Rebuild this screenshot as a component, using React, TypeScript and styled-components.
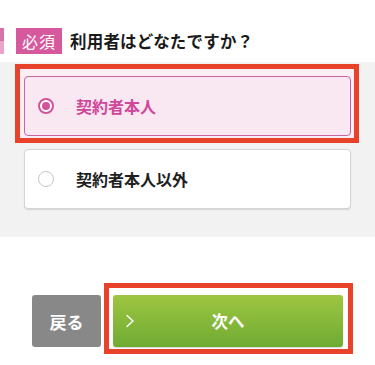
import React from 'react';
import styled, { createGlobalStyle } from 'styled-components';

const GlobalStyle = createGlobalStyle`
  html, body {
    margin: 0;
    padding: 0;
    background: #ffffff;
  }
  body {
    font-family: "Noto Sans CJK JP", "Noto Sans", sans-serif;
    color: #1a1a1a;
  }
`;

const Page = styled.div`
  width: 375px;
  height: 365px;
  overflow: hidden;
  padding-top: 28px;
  box-sizing: border-box;
`;

const Header = styled.div`
  display: flex;
  align-items: center;
  height: 26px;
`;

const SideMark = styled.div`
  width: 4px;
  height: 26px;
  background: linear-gradient(to bottom, #d870aa 0%, #d870aa 50%, #eaa4cb 50%, #eaa4cb 100%);
`;

const Badge = styled.span`
  display: flex;
  align-items: center;
  justify-content: center;
  width: 46px;
  height: 26px;
  margin-left: 12px;
  background: #d6599e;
  color: #ffffff;
  font-size: 16px;
  font-weight: 400;
  letter-spacing: 1px;
`;

const Title = styled.h2`
  margin: 0 0 0 8px;
  font-size: 16.5px;
  font-weight: 700;
  color: #1a1a1a;
  letter-spacing: 0.2px;
`;

const Choices = styled.div`
  margin-top: 8px;
  background: #f2f2f2;
  padding: 14px 24px 28px;
  display: flex;
  flex-direction: column;
  gap: 13px;
`;

const Highlighted = styled.div<{ $fill: string; $inset: string }>`
  position: relative;
  & > * {
    position: relative;
    z-index: 1;
  }
  &::before {
    content: '';
    position: absolute;
    inset: ${(p) => p.$inset};
    border: 5px solid #e8432a;
    background: ${(p) => p.$fill};
    z-index: 0;
  }
`;

const Option = styled.label<{ $selected?: boolean }>`
  display: flex;
  align-items: center;
  height: 60px;
  box-sizing: border-box;
  padding-left: 13px;
  border-radius: 4px;
  background: ${(p) => (p.$selected ? '#f9e8f2' : '#ffffff')};
  border: ${(p) => (p.$selected ? '1.5px solid #c866a2' : '1.5px solid #d4d4d4')};
  box-shadow: ${(p) => (p.$selected ? 'none' : '0 1px 1px rgba(0,0,0,0.12)')};
  cursor: pointer;
`;

const Radio = styled.span<{ $checked?: boolean }>`
  position: relative;
  width: 16px;
  height: 16px;
  box-sizing: border-box;
  border-radius: 50%;
  background: #ffffff;
  border: ${(p) => (p.$checked ? '2px solid #d2529b' : '1.5px solid #c6c6c6')};
  flex-shrink: 0;
  &::after {
    content: '';
    display: ${(p) => (p.$checked ? 'block' : 'none')};
    position: absolute;
    left: 2px;
    top: 2px;
    width: 8px;
    height: 8px;
    border-radius: 50%;
    background: #d2529b;
  }
`;

const OptionText = styled.span<{ $selected?: boolean }>`
  margin-left: 22px;
  font-size: 16px;
  font-weight: 700;
  color: ${(p) => (p.$selected ? '#d0479a' : '#1f1f1f')};
`;

const Actions = styled.div`
  display: flex;
  gap: 12px;
  padding: 0 32px;
  margin-top: 58px;
`;

const BackButton = styled.button`
  width: 69px;
  height: 52px;
  border: none;
  border-radius: 3px;
  background: #888888;
  color: #ffffff;
  font-family: inherit;
  font-size: 17px;
  font-weight: 700;
  padding: 0;
`;

const NextWrap = styled(Highlighted)`
  flex: 1;
  display: flex;
`;

const NextButton = styled.button`
  flex: 1;
  height: 52px;
  border: none;
  border-radius: 3px;
  background: linear-gradient(to bottom, #9ec541 0%, #6fab33 100%);
  box-shadow: 0 1px 1px rgba(0, 0, 0, 0.15);
  color: #ffffff;
  font-family: inherit;
  font-size: 16.5px;
  font-weight: 700;
  display: flex;
  align-items: center;
  padding: 0 0 0 12px;
`;

const NextLabel = styled.span`
  flex: 1;
  text-align: center;
  padding-right: 22px;
`;

const Chevron = () => (
  <svg width="10" height="14" viewBox="0 0 10 14" fill="none">
    <path d="M2 1.5 L8 7 L2 12.5" stroke="#ffffff" strokeWidth="1.5" strokeLinecap="round" strokeLinejoin="round" />
  </svg>
);

export default function App() {
  return (
    <>
      <GlobalStyle />
      <Page>
        <Header>
          <SideMark />
          <Badge>必須</Badge>
          <Title>利用者はどなたですか？</Title>
        </Header>
        <Choices>
          <Highlighted $fill="#fbeef4" $inset="-12px -8px -7px -9px">
            <Option $selected>
              <Radio $checked />
              <OptionText $selected>契約者本人</OptionText>
            </Option>
          </Highlighted>
          <Option>
            <Radio />
            <OptionText>契約者本人以外</OptionText>
          </Option>
        </Choices>
        <Actions>
          <BackButton>戻る</BackButton>
          <NextWrap $fill="#ffffff" $inset="-12px -10px -7px -9px">
            <NextButton>
              <Chevron />
              <NextLabel>次へ</NextLabel>
            </NextButton>
          </NextWrap>
        </Actions>
      </Page>
    </>
  );
}
